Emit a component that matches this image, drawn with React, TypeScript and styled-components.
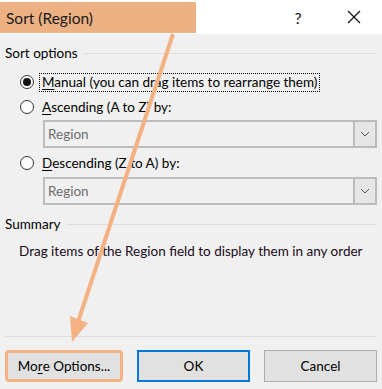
import React from "react";
import styled, { createGlobalStyle } from "styled-components";

const Global = createGlobalStyle`
  html, body { margin: 0; padding: 0; background: #f0f0f0; }
  body { font-family: "Lato", "Segoe UI", sans-serif; color: #000; }
`;

const Window = styled.div`
  position: relative;
  width: 382px;
  height: 389px;
  background: #f0f0f0;
  display: flex;
  flex-direction: column;
  overflow: hidden;
  font-size: 13.5px;
`;

const TitleBar = styled.div`
  height: 34px;
  background: #ffffff;
  display: flex;
  align-items: flex-start;
`;

const TitleHighlight = styled.div`
  margin-top: 2px;
  width: 190px;
  height: 31px;
  padding-left: 6px;
  background: #edb184;
  display: flex;
  align-items: center;
  font-size: 15.5px;
  color: #1a1a1a;
`;

const TitleButtons = styled.div`
  flex: 1;
  display: flex;
  justify-content: flex-end;
  height: 34px;
  align-items: center;
`;

const TitleButton = styled.div`
  width: 56px;
  height: 34px;
  display: flex;
  align-items: center;
  justify-content: center;
  font-size: 16px;
  color: #111;
`;

const Content = styled.div`
  flex: 1;
  display: flex;
  flex-direction: column;
  padding: 0 5px 7px 5px;
`;

const GroupHeader = styled.div<{ $top: number }>`
  margin-top: ${(p) => p.$top}px;
  height: 18px;
  display: flex;
  align-items: center;
  gap: 6px;
  color: #000;
  &::after {
    content: "";
    flex: 1;
    height: 1px;
    background: #dcdcdc;
  }
`;

const RadioRow = styled.label<{ $top: number }>`
  margin-top: ${(p) => p.$top}px;
  margin-left: 15px;
  height: 20px;
  display: flex;
  align-items: center;
  gap: 5px;
`;

const RadioCircle = styled.span<{ $checked?: boolean }>`
  width: 14px;
  height: 14px;
  box-sizing: border-box;
  border-radius: 50%;
  border: 1px solid #333;
  background: #fff;
  display: flex;
  align-items: center;
  justify-content: center;
  &::after {
    content: "";
    display: ${(p) => (p.$checked ? "block" : "none")};
    width: 8px;
    height: 8px;
    border-radius: 50%;
    background: #111;
  }
`;

const RadioLabel = styled.span<{ $focused?: boolean }>`
  padding: 0 2px;
  height: 19px;
  line-height: 17px;
  box-sizing: border-box;
  border: 1px dotted ${(p) => (p.$focused ? "#000" : "transparent")};
  white-space: nowrap;
  u { text-decoration: underline; text-underline-offset: 2px; }
`;

const Select = styled.div<{ $top: number }>`
  margin-top: ${(p) => p.$top}px;
  margin-left: 38px;
  height: 28px;
  box-sizing: border-box;
  border: 2px solid #bcbcbc;
  background: #f0f0f0;
  display: flex;
  align-items: stretch;
`;

const SelectValue = styled.div`
  flex: 1;
  display: flex;
  align-items: center;
  padding-left: 3px;
  color: #6d6d6d;
`;

const SelectButton = styled.div`
  width: 20px;
  border-left: 2px solid #bcbcbc;
  background: #e6e6e6;
  display: flex;
  align-items: center;
  justify-content: center;
`;

const SummaryText = styled.div`
  margin-top: 9px;
  padding-left: 14px;
  height: 18px;
  line-height: 18px;
  color: #1a0a1a;
  white-space: nowrap;
`;

const Footer = styled.div`
  margin-top: auto;
  border-top: 1px solid #dcdcdc;
  padding-top: 13px;
  display: flex;
  justify-content: space-between;
`;

const Button = styled.div<{ $variant?: "default" | "highlight" }>`
  width: 113px;
  height: 32px;
  box-sizing: border-box;
  background: #e1e1e1;
  border: ${(p) =>
    p.$variant === "default" ? "2px solid #0078d7" : "1px solid #adadad"};
  display: flex;
  align-items: center;
  justify-content: center;
  color: #000;
  u { text-decoration: underline; text-underline-offset: 2px; }
`;

const HighlightFrame = styled.div`
  width: 118px;
  height: 32px;
  box-sizing: border-box;
  border: 3px solid #f4b183;
  border-radius: 4px;
  background: #e1e1e1;
  display: flex;
  align-items: center;
  justify-content: center;
  u { text-decoration: underline; text-underline-offset: 2px; }
`;

const ArrowOverlay = styled.svg`
  position: absolute;
  left: 0;
  top: 0;
  pointer-events: none;
`;

const Chevron = () => (
  <svg width="10" height="6" viewBox="0 0 10 6">
    <path d="M1 1 L5 5 L9 1" fill="none" stroke="#555" strokeWidth="1" />
  </svg>
);

export default function App() {
  return (
    <>
      <Global />
      <Window>
        <TitleBar>
          <TitleHighlight>Sort (Region)</TitleHighlight>
          <TitleButtons>
            <TitleButton>?</TitleButton>
            <TitleButton>
              <svg width="14" height="14" viewBox="0 0 14 14">
                <path d="M1 1 L13 13 M13 1 L1 13" stroke="#111" strokeWidth="1.2" />
              </svg>
            </TitleButton>
          </TitleButtons>
        </TitleBar>
        <Content>
          <GroupHeader $top={10}>Sort options</GroupHeader>
          <RadioRow $top={10}>
            <RadioCircle $checked />
            <RadioLabel $focused>
              <u>M</u>anual (you can drag items to rearrange them)
            </RadioLabel>
          </RadioRow>
          <RadioRow $top={5}>
            <RadioCircle />
            <RadioLabel>
              <u>A</u>scending (A to Z) by:
            </RadioLabel>
          </RadioRow>
          <Select $top={3}>
            <SelectValue>Region</SelectValue>
            <SelectButton>
              <Chevron />
            </SelectButton>
          </Select>
          <RadioRow $top={5}>
            <RadioCircle />
            <RadioLabel>
              <u>D</u>escending (Z to A) by:
            </RadioLabel>
          </RadioRow>
          <Select $top={4}>
            <SelectValue>Region</SelectValue>
            <SelectButton>
              <Chevron />
            </SelectButton>
          </Select>
          <GroupHeader $top={10}>Summary</GroupHeader>
          <SummaryText>Drag items of the Region field to display them in any order</SummaryText>
          <Footer>
            <HighlightFrame>
              Mo<u>r</u>e Options...
            </HighlightFrame>
            <Button $variant="default">OK</Button>
            <Button>Cancel</Button>
          </Footer>
        </Content>
        <ArrowOverlay width="382" height="389" viewBox="0 0 382 389">
          <line x1="173" y1="34" x2="78" y2="322" stroke="#f4b183" strokeWidth="4" />
          <polygon points="72,342 70,316 88,323" fill="#f4b183" />
        </ArrowOverlay>
      </Window>
    </>
  );
}
